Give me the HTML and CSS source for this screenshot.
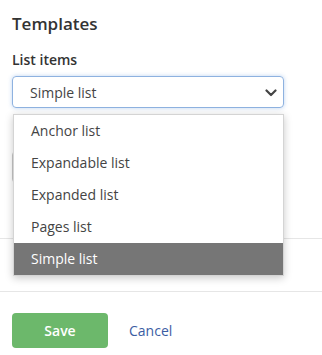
FILE: index.html
```html
<!DOCTYPE html>
<html lang="en">
<head>
  <meta charset="UTF-8" />
  <title>Templates</title>
  <link rel="stylesheet" href="styles.css">
</head>
<body>

<div class="secao">
  <h2>Templates</h2>

  <div class="campo">
    <label>List items</label>
    <div class="select aberto">
      <span>Simple list</span>
      <svg class="seta" width="12" height="8" viewBox="0 0 12 8">
        <path d="M1.5 1.5 L6 6 L10.5 1.5" fill="none" stroke="#444" stroke-width="2.2" stroke-linecap="round" stroke-linejoin="round"/>
      </svg>
      <ul class="menu">
        <li>Anchor list</li>
        <li>Expandable list</li>
        <li>Expanded list</li>
        <li>Pages list</li>
        <li class="ativo">Simple list</li>
      </ul>
    </div>
  </div>

  <!-- segundo campo fica escondido atras do menu aberto -->
  <div class="campo escondido">
    <div class="select"></div>
  </div>
</div>

<div class="secao vazia"></div>

<div class="rodape">
  <button class="salvar">Save</button>
  <a class="cancelar" href="#">Cancel</a>
</div>

</body>
</html>
```

FILE: styles.css
```css
body {
  margin: 0;
  background-color: #fff;
  color: #333;
  font-family: "Open Sans", Arial, sans-serif;
}
.secao {
  padding: 12px 12px 55px;
  border-bottom: 1px solid #e6e6e6;
}
.secao.vazia {
  padding: 0;
  height: 52px;
}
h2 {
  font-size: 17px;
  font-weight: 600;
  line-height: 24px;
  margin: 0 0 14px;
}
.campo label {
  display: block;
  font-size: 14px;
  font-weight: 600;
  line-height: 20px;
  margin-bottom: 6px;
}
.campo.escondido {
  margin-top: 43px;
}
.select {
  position: relative;
  width: 272px;
  height: 32px;
  box-sizing: border-box;
  border: 1px solid #c8c8c8;
  border-radius: 4px;
  padding: 0 17px;
  display: flex;
  align-items: center;
  font-size: 14px;
  color: #444;
}
.select.aberto {
  border-color: #8eb2e0;
  box-shadow: 0 0 4px rgba(110, 160, 225, 0.45);
}
.seta {
  position: absolute;
  right: 6px;
  top: 12px;
}
.menu {
  position: absolute;
  z-index: 10;
  left: 0;
  top: 37px;
  width: 269px;
  margin: 0;
  padding: 0;
  list-style: none;
  background-color: #fff;
  border: 1px solid #d4d4d4;
  box-shadow: 0 2px 8px rgba(0, 0, 0, 0.22);
}
.menu li {
  height: 32px;
  line-height: 32px;
  padding: 0 17px;
  font-size: 14px;
  color: #444;
}
.menu li.ativo {
  background-color: #767676;
  color: #fff;
}
.rodape {
  padding: 21px 12px;
  display: flex;
  align-items: center;
  gap: 21px;
}
.salvar {
  width: 96px;
  height: 35px;
  border: none;
  border-radius: 4px;
  background-color: #6cb86b;
  color: #fff;
  font-family: inherit;
  font-size: 14px;
  font-weight: 600;
}
.cancelar {
  color: #3b5da3;
  font-size: 14px;
  text-decoration: none;
}
```
